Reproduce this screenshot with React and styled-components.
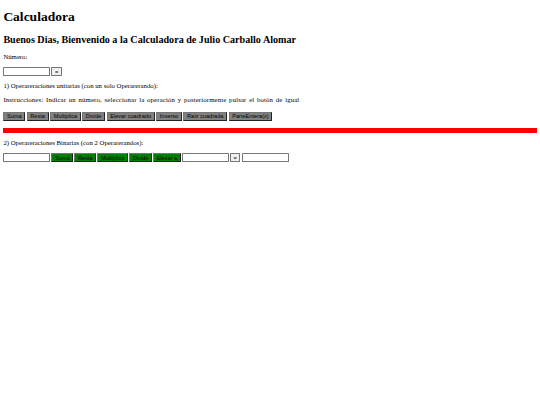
import React, { useState } from "react";
import styled, { createGlobalStyle } from "styled-components";

const GlobalStyle = createGlobalStyle`
  html, body {
    margin: 0;
    background: #fff;
  }
`;

// la captura original es de 1280px de ancho, reducida a 540
const Page = styled.div`
  zoom: 0.421875;
  margin: 8px;
  font-family: "Liberation Serif", "Times New Roman", serif;
  font-size: 16px;
  color: #000;
`;

const Title = styled.h1`
  font-size: 32px;
  font-weight: bold;
  margin: 21.44px 0;
`;

const Subtitle = styled.h2`
  font-size: 24px;
  font-weight: bold;
  margin: 19.92px 0;
`;

const Text = styled.p`
  margin: 16px 0;
  word-spacing: ${(p) => (p.$wide ? "2px" : "normal")};
  letter-spacing: ${(p) => (p.$wide ? "0.35px" : "normal")};
`;

const Row = styled.div`
  display: flex;
  align-items: center;
  gap: ${(p) => p.$gap || "4px"};
  margin: ${(p) => p.$margin || "0"};
`;

const Field = styled.input`
  box-sizing: border-box;
  width: 111px;
  height: 20px;
  padding: 1px 2px;
  border: 1px solid #767676;
  border-radius: 2px;
  font-family: "Liberation Sans", Arial, sans-serif;
  font-size: 13.33px;
`;

const Btn = styled.button`
  font-family: "Liberation Sans", Arial, sans-serif;
  font-size: 13.33px;
  padding: 1px 6px;
  height: ${(p) => (p.$plain ? "20px" : "auto")};
  color: #000;
  background: ${(p) => p.$bg || "#efefef"};
  border: ${(p) => (p.$plain ? "1px solid #767676" : "2px outset #767676")};
  border-radius: ${(p) => (p.$plain ? "2px" : "0")};
  cursor: pointer;
`;

const RedBar = styled.div`
  height: 10px;
  background: #ff0000;
  margin: 18px 0 13px;
`;

const unarias = [
  "Suma",
  "Resta",
  "Multiplica",
  "Divide",
  "Elevar cuadrado",
  "Inverso",
  "Raíz cuadrada",
  "ParteEntera(x)",
];

const binarias = ["Suma", "Resta", "Multiplica", "Divide", "Elevar a"];

export default function App() {
  const [numero, setNumero] = useState("");
  const [a, setA] = useState("");
  const [b, setB] = useState("");
  const [res, setRes] = useState("");

  return (
    <>
      <GlobalStyle />
      <Page>
        <Title>Calculadora</Title>
        <Subtitle>Buenos Dias, Bienvenido a la Calculadora de Julio Carballo Alomar</Subtitle>
        <Text>Número:</Text>
        <Row $gap="3px">
          <Field value={numero} onChange={(e) => setNumero(e.target.value)} />
          <Btn $plain>=</Btn>
        </Row>
        <Text>1) Operareraciones unitarias (con un solo Operarerando):</Text>
        <Text $wide>
          Instrucciones: Indicar un número, seleccionar la operación y posteriormente pulsar el botón de igual
        </Text>
        <Row $margin="21px 0 0">
          {unarias.map((op) => (
            <Btn key={op} $bg="#808080">
              {op}
            </Btn>
          ))}
        </Row>
        <RedBar />
        <Text>2) Operareraciones Binarias (con 2 Operarerandos):</Text>
        <Row $gap="3px">
          <Field value={a} onChange={(e) => setA(e.target.value)} />
          {binarias.map((op) => (
            <Btn key={op} $bg="#008000">
              {op}
            </Btn>
          ))}
          <Field value={b} onChange={(e) => setB(e.target.value)} />
          <Btn $plain>=</Btn>
          <Field value={res} onChange={(e) => setRes(e.target.value)} />
        </Row>
      </Page>
    </>
  );
}
